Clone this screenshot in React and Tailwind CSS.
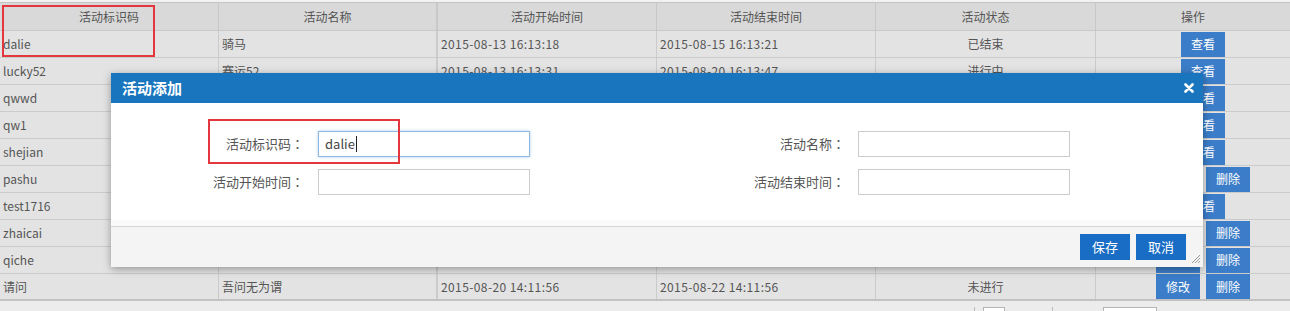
import React from "react";

const rows = [
  { code: "dalie", name: "骑马", start: "2015-08-13 16:13:18", end: "2015-08-15 16:13:21", status: "已结束", ops: ["查看"] },
  { code: "lucky52", name: "赛运52", start: "2015-08-13 16:13:31", end: "2015-08-20 16:13:47", status: "进行中", ops: ["查看"] },
  { code: "qwwd", name: "", start: "", end: "", status: "", ops: ["查看"] },
  { code: "qw1", name: "", start: "", end: "", status: "", ops: ["查看"] },
  { code: "shejian", name: "", start: "", end: "", status: "", ops: ["查看"] },
  { code: "pashu", name: "", start: "", end: "", status: "", ops: ["修改", "删除"] },
  { code: "test1716", name: "", start: "", end: "", status: "", ops: ["查看"] },
  { code: "zhaicai", name: "", start: "", end: "", status: "", ops: ["修改", "删除"] },
  { code: "qiche", name: "", start: "", end: "", status: "", ops: ["修改", "删除"] },
  { code: "请问", name: "吾问无为谓", start: "2015-08-20 14:11:56", end: "2015-08-22 14:11:56", status: "未进行", ops: ["修改", "删除"] },
];

const headers = ["活动标识码", "活动名称", "活动开始时间", "活动结束时间", "活动状态", "操作"];

const grid = "grid grid-cols-[219px_218px_220px_219px_220px_1fr]";

function TableBtn({ label }) {
  return (
    <div className="w-[44px] h-[25px] bg-[#3b7dc8] text-white text-[12px] flex items-center justify-center">
      {label}
    </div>
  );
}

function Label({ text, w }) {
  return (
    <div className={`${w} text-right`}>
      {text}
      <span className="font-['Noto_Sans_CJK_JP',sans-serif]">：</span>
    </div>
  );
}

export default function App() {
  const font = { fontFamily: '"Noto Sans CJK SC", "Noto Sans", sans-serif' };
  return (
    <div className="relative w-[1290px] h-[311px] overflow-hidden bg-[#ececec] text-[#555]" style={font}>
      <div className="h-[3px] bg-[#f2f2f2] border-b border-[#c4c4c4]" />
      <div className={`${grid} h-[28px] bg-[#d9d9d9] border-b border-[#c8c8c8] text-[12px] text-[#555]`}>
        {headers.map((h, i) => (
          <div
            key={h}
            className={`flex items-center justify-center ${i < 5 ? "border-r border-[#c8c8c8]" : ""} ${i === 2 ? "border-l border-[#c8c8c8]" : ""}`}
          >
            {h}
          </div>
        ))}
      </div>
      {rows.map((r, idx) => (
        <div
          key={r.code}
          className={`${grid} h-[27px] bg-[#e3e3e3] border-b ${idx === rows.length - 1 ? "border-b-2 border-[#c2c2c2]" : "border-[#cbcbcb]"} text-[12px] text-[#555]`}
        >
          <div className="flex items-center pl-[3px] border-r border-[#cbcbcb]">{r.code}</div>
          <div className="flex items-center pl-[3px] border-r border-[#cbcbcb]">{r.name}</div>
          <div className="flex items-center pl-[3px] border-l border-r border-[#cbcbcb] tracking-[0.4px]">{r.start}</div>
          <div className="flex items-center pl-[3px] border-r border-[#cbcbcb] tracking-[0.4px]">{r.end}</div>
          <div className="flex items-center justify-center border-r border-[#cbcbcb]">{r.status}</div>
          <div className="flex items-center justify-center gap-[6px] pl-[20px]">
            {r.ops.map((o) => (
              <TableBtn key={o} label={o} />
            ))}
          </div>
        </div>
      ))}
      <div className="relative h-[10px]">
        <div className="absolute left-[974px] top-[6px] w-[1px] h-[4px] bg-[#bbb]" />
        <div className="absolute left-[983px] top-[6px] w-[22px] h-[6px] border border-[#b5b5b5] bg-white" />
        <div className="absolute left-[1052px] top-[6px] w-[1px] h-[4px] bg-[#bbb]" />
        <div className="absolute left-[1103px] top-[6px] w-[54px] h-[6px] border border-[#b5b5b5] bg-white" />
      </div>

      {/* annotation on header */}
      <div className="absolute left-[2px] top-[5px] w-[153px] h-[52px] border-2 border-[#e3363d]" />

      {/* Modal */}
      <div className="absolute left-[111px] top-[73px] w-[1092px] flex flex-col shadow-[0_2px_8px_rgba(0,0,0,0.35)]">
        <div className="h-[30px] bg-[#1875be] flex items-center justify-between pl-[11px] pr-[9px]">
          <span className="text-white font-bold text-[15px]">活动添加</span>
          <svg width="10" height="10" viewBox="0 0 10 10">
            <path d="M1.5 1.5 L8.5 8.5 M8.5 1.5 L1.5 8.5" stroke="white" strokeWidth="2.6" strokeLinecap="round" />
          </svg>
        </div>
        <div className="relative bg-white pt-[28px] pb-[25px] flex flex-col gap-[12px] text-[13px] text-[#555]">
          <div className="flex items-center">
            <Label text="活动标识码" w="w-[193px]" />
            <div className="ml-[14px] w-[212px] h-[26px] border border-[#8fb8e2] shadow-[0_0_3px_rgba(100,160,220,0.5)] flex items-center pl-[6px] text-[13px] text-[#444]">
              dalie<span className="w-[1px] h-[16px] bg-[#222] ml-[1px]" />
            </div>
            <Label text="活动名称" w="w-[315px]" />
            <div className="ml-[13px] w-[212px] h-[26px] border border-[#cccccc]" />
          </div>
          <div className="flex items-center">
            <Label text="活动开始时间" w="w-[193px]" />
            <div className="ml-[14px] w-[212px] h-[26px] border border-[#cccccc]" />
            <Label text="活动结束时间" w="w-[315px]" />
            <div className="ml-[13px] w-[212px] h-[26px] border border-[#cccccc]" />
          </div>
          <div className="absolute left-[97px] top-[16px] w-[192px] h-[45px] border-2 border-[#e3363d]" />
        </div>
        <div className="h-[7px] bg-[#fafafa] border-b border-[#d6d6d6]" />
        <div className="relative h-[40px] bg-[#f4f4f4] flex items-start justify-end gap-[6px] pt-[7px] pr-[17px]">
          <div className="w-[50px] h-[26px] bg-[#1a6dc4] text-white text-[13px] flex items-center justify-center">保存</div>
          <div className="w-[50px] h-[26px] bg-[#1a6dc4] text-white text-[13px] flex items-center justify-center">取消</div>
          <svg className="absolute right-[2px] bottom-[3px]" width="11" height="11" viewBox="0 0 11 11">
            <path d="M10 2 L2 10 M10 5 L5 10 M10 8 L8 10" stroke="#9a9a9a" strokeWidth="1" />
          </svg>
        </div>
      </div>
    </div>
  );
}
